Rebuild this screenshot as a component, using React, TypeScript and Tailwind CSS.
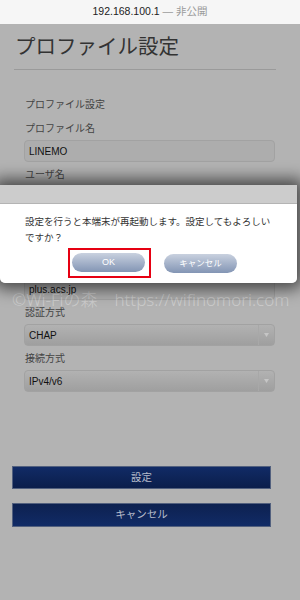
import React from "react";

const jp = { fontFamily: '"Liberation Sans", "Noto Sans CJK JP", sans-serif' };

function Label({ text, h = "h-[24px]" }: { text: string; h?: string }) {
  return (
    <div className={`${h} flex items-center pl-[11px] text-[10px] text-[#444]`}>{text}</div>
  );
}

function Input({ value }: { value: string }) {
  return (
    <div className="h-[22px] ml-[10px] w-[251px] rounded-[4px] border border-[#a2a2a2] bg-[#adadad] flex items-center pl-[4px] text-[10px] text-[#111]">
      {value}
    </div>
  );
}

function Select({ value }: { value: string }) {
  return (
    <div className="h-[22px] ml-[10px] w-[251px] rounded-[4px] border border-[#a2a2a2] bg-gradient-to-b from-[#b2b2b2] to-[#9f9f9f] flex items-center text-[10px] text-[#111]">
      <div className="flex-1 pl-[4px]">{value}</div>
      <div className="w-[16px] h-full border-l border-[#a8a8a8] flex items-center justify-center">
        <svg width="5" height="4" viewBox="0 0 5 4">
          <path d="M0 0 L5 0 L2.5 4 Z" fill="#c6c6c6" />
        </svg>
      </div>
    </div>
  );
}

export default function App() {
  return (
    <div className="relative w-[300px] h-[600px] overflow-hidden bg-[#b3b3b3]" style={jp}>
      <div className="h-[24px] bg-[#f6f6f6] flex items-center justify-center text-[10.5px]">
        <span className="text-[#222]">192.168.100.1</span>
        <span className="text-[#9a9a9a]">&nbsp;— 非公開</span>
      </div>

      <div className="ml-[14px] w-[262px]">
        <div className="mt-[8px] h-[30px] flex items-center pl-[1px] pb-0 text-[20.5px] text-[#333]">
          プロファイル設定
        </div>
        <div className="mt-[7px] border-b border-[#9a9a9a]" />

        <div className="mt-[23px] flex flex-col">
          <Label text="プロファイル設定" h="h-[23px]" />
          <Label text="プロファイル名" />
          <Input value="LINEMO" />
          <Label text="ユーザ名" />
          <Input value="" />
          <Label text="パスワード" />
          <Input value="" />
          <Label text="APN" />
          <Input value="plus.acs.jp" />
          <Label text="認証方式" />
          <Select value="CHAP" />
          <Label text="接続方式" />
          <Select value="IPv4/v6" />
        </div>
      </div>

      <div className="ml-[12px] w-[259px] mt-[74px] flex flex-col gap-[14px]">
        <div className="h-[23px] border border-[#52607e] bg-gradient-to-b from-[#112b66] to-[#0b1e4b] flex items-center justify-center text-[10.5px] text-[#b7bccb]">
          設定
        </div>
        <div className="h-[24px] border border-[#52607e] bg-gradient-to-b from-[#0d2150] to-[#112b66] flex items-center justify-center text-[10.5px] text-[#b7bccb]">
          キャンセル
        </div>
      </div>

      {/* watermark */}
      <div
        className="absolute left-[12px] top-[289px] text-[17px] font-light leading-[22px] text-white/35 whitespace-nowrap"
        style={{ fontFamily: '"Noto Sans", "Noto Sans CJK JP", sans-serif' }}
      >
        ©Wi-Fiの森　https://wifinomori.com
      </div>

      {/* dialog */}
      <div className="absolute left-0 top-[185px] w-[297px] rounded-b-[5px] shadow-[0_0_16px_6px_rgba(0,0,0,0.6)]">
        <div className="h-[19px] bg-[#cccccc] border-b border-[#b4b4b4]" />
        <div className="bg-white rounded-b-[5px] pt-[10px] pb-[10px]">
          <div className="pl-[25px] pr-[18px] text-[9.5px] leading-[16px] text-[#333]">
            設定を行うと本端末が再起動します。設定してもよろしいですか？
          </div>
          <div className="mt-[7px] pl-[72px] flex gap-[19px]">
            <div className="relative">
              <div className="w-[73px] h-[19px] rounded-full bg-gradient-to-b from-[#c9d1df] to-[#8395b4] flex items-center justify-center text-[9px] text-white">
                OK
              </div>
              <div className="absolute -left-[4px] -top-[5px] w-[83px] h-[30px] border-2 border-[#e60012]" />
            </div>
            <div className="w-[73px] h-[19px] mt-[1px] rounded-full bg-gradient-to-b from-[#c9d1df] to-[#8395b4] flex items-center justify-center text-[8.5px] text-white">
              キャンセル
            </div>
          </div>
        </div>
      </div>
    </div>
  );
}
